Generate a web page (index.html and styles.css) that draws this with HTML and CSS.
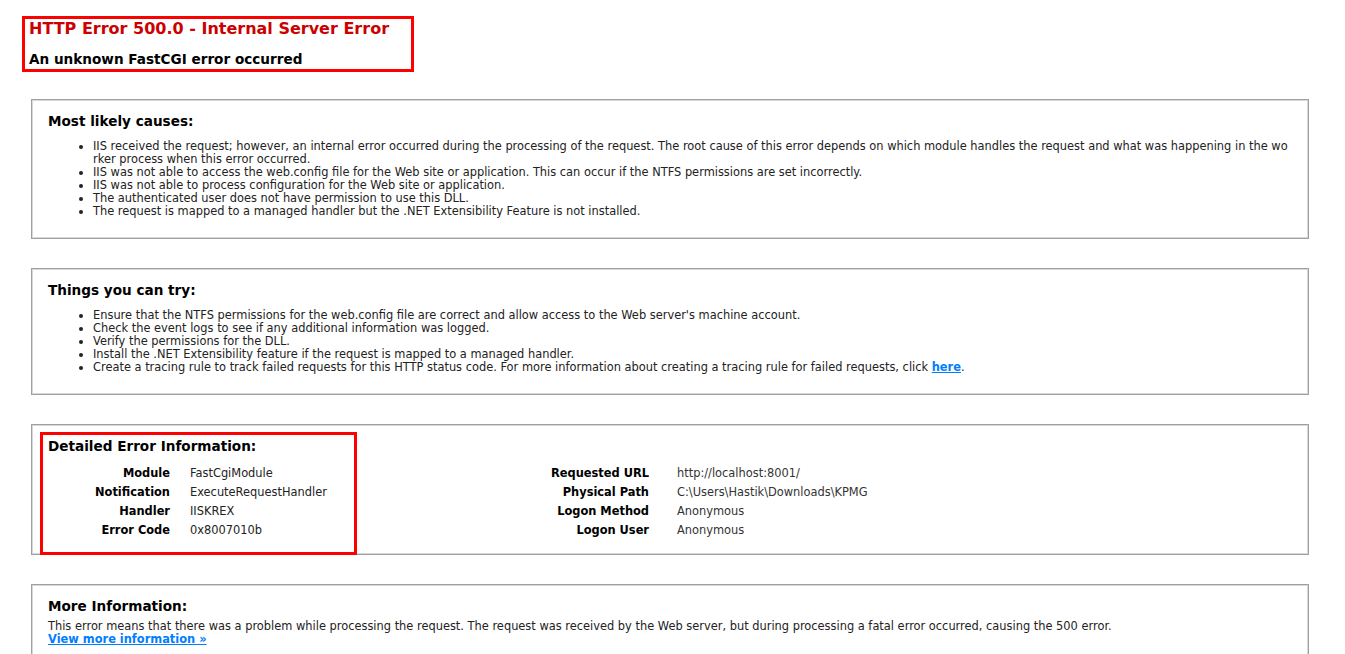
FILE: index.html
```html
<!DOCTYPE html>
<html lang="en">
<head>
    <meta charset="UTF-8">
    <title>IIS 10.0 Detailed Error - 500.0 - Internal Server Error</title>
    <link rel="stylesheet" href="styles.css">
</head>
<body>

<div class="content">
    <div class="summary">
        <h3>HTTP Error 500.0 - Internal Server Error</h3>
        <h4>An unknown FastCGI error occurred</h4>
    </div>
    <div class="mark mark-summary"></div>

    <fieldset class="panel">
        <h4>Most likely causes:</h4>
        <ul>
            <li>IIS received the request; however, an internal error occurred during the processing of the request. The root cause of this error depends on which module handles the request and what was happening in the worker process when this error occurred.</li>
            <li>IIS was not able to access the web.config file for the Web site or application. This can occur if the NTFS permissions are set incorrectly.</li>
            <li>IIS was not able to process configuration for the Web site or application.</li>
            <li>The authenticated user does not have permission to use this DLL.</li>
            <li>The request is mapped to a managed handler but the .NET Extensibility Feature is not installed.</li>
        </ul>
    </fieldset>

    <fieldset class="panel">
        <h4>Things you can try:</h4>
        <ul>
            <li>Ensure that the NTFS permissions for the web.config file are correct and allow access to the Web server's machine account.</li>
            <li>Check the event logs to see if any additional information was logged.</li>
            <li>Verify the permissions for the DLL.</li>
            <li>Install the .NET Extensibility feature if the request is mapped to a managed handler.</li>
            <li>Create a tracing rule to track failed requests for this HTTP status code. For more information about creating a tracing rule for failed requests, click <a href="#">here</a>.</li>
        </ul>
    </fieldset>

    <fieldset class="panel details">
        <h4>Detailed Error Information:</h4>
        <div class="details-cols">
            <table class="details-left">
                <tr><th>Module</th><td>FastCgiModule</td></tr>
                <tr><th>Notification</th><td>ExecuteRequestHandler</td></tr>
                <tr><th>Handler</th><td>IISKREX</td></tr>
                <tr><th>Error Code</th><td>0x8007010b</td></tr>
            </table>
            <table class="details-right">
                <tr><th>Requested URL</th><td>http://localhost:8001/</td></tr>
                <tr><th>Physical Path</th><td>C:\Users\Hastik\Downloads\KPMG</td></tr>
                <tr><th>Logon Method</th><td>Anonymous</td></tr>
                <tr><th>Logon User</th><td>Anonymous</td></tr>
            </table>
        </div>
        <div class="mark mark-details"></div>
    </fieldset>

    <fieldset class="panel">
        <h4>More Information:</h4>
        <p>This error means that there was a problem while processing the request. The request was received by the Web server, but during processing a fatal error occurred, causing the 500 error.</p>
        <p><a href="#">View more information &raquo;</a></p>
    </fieldset>
</div>

</body>
</html>
```

FILE: styles.css
```css
body {
    margin: 0;
    font-family: "DejaVu Sans", Verdana, sans-serif;
    font-size: 11.42px;
    line-height: 13px;
    color: #222;
    background: #fff;
}
.content {
    position: relative;
    margin: 0 36px 0 31px;
    padding-top: 19px;
}
.summary {
    margin-left: -2px;
}
.summary h3 {
    margin: 0;
    font-size: 16px;
    line-height: 20px;
    font-weight: bold;
    color: #cc0000;
}
.summary h4 {
    margin-top: 11px;
}
h4 {
    margin: 10px 0 5px 0;
    font-size: 13.6px;
    line-height: 18px;
    font-weight: bold;
    color: #000;
}
.panel {
    margin: 31px 0 0 0;
    padding: 2px 16px 10px 16px;
    border: 1px solid #a0a0a0;
    box-shadow: inset 1px 1px 0 #d8d8d8, inset -1px -1px 0 #d8d8d8;
    min-inline-size: 0;
    word-break: break-all;
}
.panel + .panel {
    margin-top: 29px;
}
.panel ul {
    margin: 10px 0 10px 5px;
    padding-left: 40px;
}
.panel p {
    margin: 0;
}
a:link, a:visited {
    color: #007eff;
    font-weight: bold;
}
.details {
    position: relative;
}
.details-cols {
    display: flex;
    margin: 9px 0 4px 0;
}
.details-cols table {
    border-collapse: collapse;
}
.details-cols th, .details-cols td {
    padding: 3px 0;
    vertical-align: top;
    text-align: left;
    font-weight: normal;
}
.details-cols th {
    text-align: right;
    font-weight: bold;
    color: #000;
}
.details-left {
    width: 460px;
}
.details-left th {
    width: 122px;
    padding-right: 20px;
}
.details-right th {
    width: 141px;
    padding-right: 28px;
}
.details-right td {
    color: #333;
}
.mark {
    position: absolute;
    border: 3px solid #ff0000;
    pointer-events: none;
}
.mark-summary {
    left: -9px;
    top: 16px;
    width: 386px;
    height: 50px;
}
.mark-details {
    left: 8px;
    top: 7px;
    width: 311px;
    height: 117px;
}
```
